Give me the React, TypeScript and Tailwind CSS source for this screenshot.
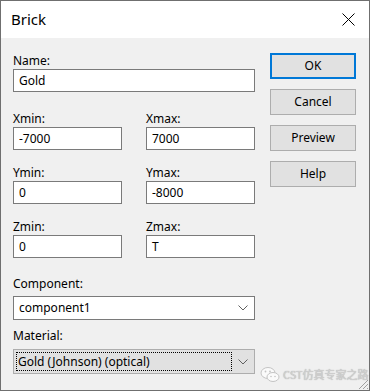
import React from "react";

const font = { fontFamily: '"Noto Sans", "Open Sans", Arial, sans-serif' };

function Field({ label, value, className }: { label: string; value: string; className?: string }) {
  return (
    <div className={className}>
      <div className="h-4 text-[12px] leading-4 text-black">{label}</div>
      <div className="h-[23px] border border-[#7a7a7a] bg-white px-[5px] text-[12px] leading-[21px] text-black">
        {value}
      </div>
    </div>
  );
}

function Chevron() {
  return (
    <svg width="10" height="6" viewBox="0 0 10 6" className="shrink-0">
      <path d="M0.5 0.5 L5 5 L9.5 0.5" fill="none" stroke="#606060" strokeWidth="1" />
    </svg>
  );
}

function Btn({ children, primary }: { children: React.ReactNode; primary?: boolean }) {
  return (
    <div
      className={
        "flex h-[26px] w-[86px] items-center justify-center bg-[#e1e1e1] text-[12px] text-black " +
        (primary ? "border-2 border-[#0078d7]" : "border border-[#adadad]")
      }
    >
      {children}
    </div>
  );
}

function WeChat() {
  return (
    <svg width="20" height="17" viewBox="0 0 20 17" className="shrink-0">
      <ellipse cx="8" cy="7" rx="7" ry="5.5" fill="#fafafa" stroke="#c4c4c4" strokeWidth="1" />
      <ellipse cx="13" cy="11" rx="6" ry="4.5" fill="#fafafa" stroke="#c4c4c4" strokeWidth="1" />
      <circle cx="5.5" cy="5.5" r="0.9" fill="#c4c4c4" />
      <circle cx="10" cy="5.5" r="0.9" fill="#c4c4c4" />
      <circle cx="11" cy="10.5" r="0.8" fill="#c4c4c4" />
      <circle cx="15" cy="10.5" r="0.8" fill="#c4c4c4" />
    </svg>
  );
}

export default function App() {
  return (
    <div style={font} className="flex h-[391px] w-[370px] flex-col border border-[#6f6f6f] bg-[#f0f0f0]">
      {/* title bar */}
      <div className="flex h-[37px] shrink-0 items-center justify-between bg-white pl-[10px] pr-[14px]">
        <span className="text-[15px] text-black">Brick</span>
        <svg width="13" height="13" viewBox="0 0 13 13">
          <path d="M0.5 0.5 L12.5 12.5 M12.5 0.5 L0.5 12.5" stroke="#000" strokeWidth="1" />
        </svg>
      </div>

      <div className="relative flex flex-1 gap-[15px] pl-3 pr-3 pt-[15px]">
        <div className="flex w-[242px] flex-col">
          <Field label="Name:" value="Gold" />
          <div className="mt-[19px] grid grid-cols-[109px_109px] gap-x-6 gap-y-[15px]">
            <Field label="Xmin:" value="-7000" />
            <Field label="Xmax:" value="7000" />
            <Field label="Ymin:" value="0" />
            <Field label="Ymax:" value="-8000" />
            <Field label="Zmin:" value="0" />
            <Field label="Zmax:" value="T" />
          </div>

          <div className="mt-[18px] h-4 text-[12px] leading-4 text-black">Component:</div>
          <div className="mt-1 flex h-6 items-center justify-between border border-[#7a7a7a] bg-white pl-[5px] pr-[6px] text-[12px] text-black">
            <span>component1</span>
            <Chevron />
          </div>

          <div className="mt-2 h-4 text-[12px] leading-4 text-black">Material:</div>
          <div className="mt-[5px] flex h-[25px] items-center justify-between border border-[#adadad] bg-[#e1e1e1] pl-[2px] pr-[6px] text-[12px] text-black">
            <span className="flex h-[19px] w-[216px] items-center border border-dotted border-black pl-[1px]">
              Gold (Johnson) (optical)
            </span>
            <Chevron />
          </div>
        </div>

        <div className="flex flex-col gap-[10px]">
          <Btn primary>OK</Btn>
          <Btn>Cancel</Btn>
          <Btn>Preview</Btn>
          <Btn>Help</Btn>
        </div>

        {/* watermark */}
        <div className="absolute bottom-[7px] left-[259px] flex items-center gap-[3px] text-[11px] text-[#d2d2d2]">
          <WeChat />
          <span style={{ fontFamily: '"Noto Sans CJK SC", "Noto Sans", sans-serif', textShadow: "0 0 1px #9a9a9a" }}>
            CST仿真专家之路
          </span>
        </div>

        {/* resize grip */}
        <svg width="12" height="12" viewBox="0 0 12 12" className="absolute bottom-0 right-0">
          <path d="M11 2 L2 11 M11 6 L6 11 M11 10 L10 11" stroke="#a0a0a0" strokeWidth="1" />
        </svg>
      </div>
    </div>
  );
}
